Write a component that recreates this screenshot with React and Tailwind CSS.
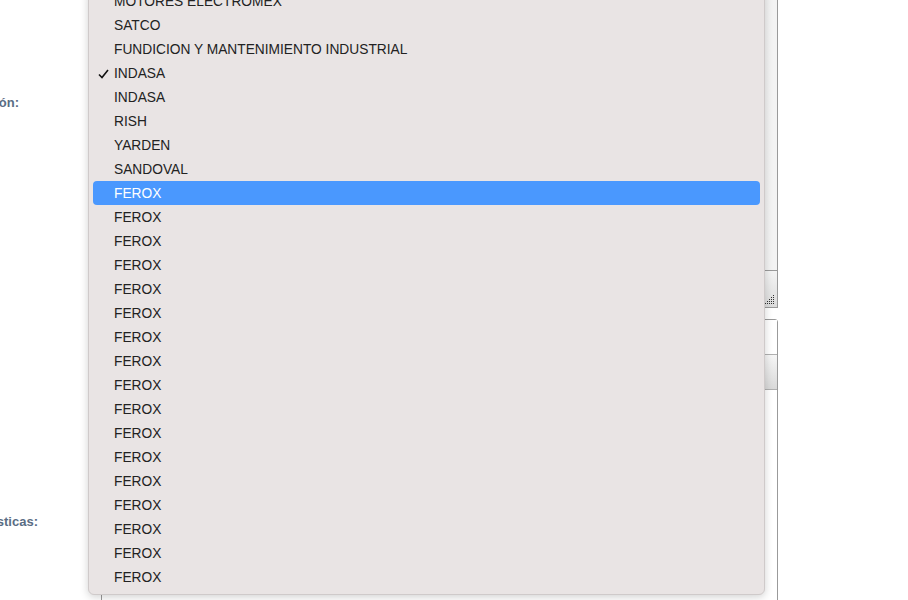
import React from 'react';

const items = [
    'MOTORES ELECTROMEX',
    'SATCO',
    'FUNDICION Y MANTENIMIENTO INDUSTRIAL',
    'INDASA',
    'INDASA',
    'RISH',
    'YARDEN',
    'SANDOVAL',
    ...Array(17).fill('FEROX'),
];

const App = () => {
    return (
        <div className="relative w-[908px] h-[600px] overflow-hidden bg-white font-['Liberation_Sans',Arial,sans-serif]">
            {/* Form behind the menu */}
            <div className="flex">
                <div className="w-[101px] shrink-0 relative">
                    <div className="absolute right-[82px] top-[93px] text-[13px] font-bold text-[#5a6d84] whitespace-nowrap">ón:</div>
                    <div className="absolute right-[63px] top-[512px] text-[13px] font-bold text-[#5a6d84] whitespace-nowrap">sticas:</div>
                </div>
                <div className="w-[677px] flex flex-col">
                    <div className="h-[308px] border-x border-b border-[#9a9a9a] flex flex-col">
                        <div className="flex-1 bg-gradient-to-r from-white to-[#f3f3f3]"></div>
                        <div className="h-[37px] border-t border-[#9a9a9a] bg-gradient-to-b from-[#f4f4f4] to-[#dcdcdc] flex items-end justify-end p-[2px]">
                            <svg width="10" height="10" viewBox="0 0 10 10">
                                {[[8, 0], [6, 2], [8, 2], [4, 4], [6, 4], [8, 4], [2, 6], [4, 6], [6, 6], [8, 6], [0, 8], [2, 8], [4, 8], [6, 8], [8, 8]].map(([x, y], i) => (
                                    <rect key={i} x={x} y={y} width="1" height="1" fill="#333" />
                                ))}
                            </svg>
                        </div>
                    </div>
                    <div className="mt-[11px] h-[300px] border border-[#9a9a9a] rounded-tr-[3px] flex flex-col">
                        <div className="h-[34px] bg-white"></div>
                        <div className="h-[36px] border-y border-[#b0b0b0] bg-gradient-to-b from-[#f6f6f6] to-[#d9d9d9]"></div>
                        <div className="flex-1 bg-white"></div>
                    </div>
                </div>
            </div>

            {/* Open select menu */}
            <div className="absolute left-[88px] top-[-12px] w-[677px] rounded-[6px] border border-[#cfcaca] bg-[#e9e4e4] pb-[5px] px-[4px] shadow-[0_2px_8px_rgba(0,0,0,0.18)]">
                {items.map((label, i) => {
                    const active = i === 8;
                    return (
                        <div
                            key={i}
                            className={`h-[24px] flex items-center pl-[21px] pt-[2px] rounded-[4px] text-[13.75px] leading-none relative ${active ? 'bg-[#4a98fe] text-white' : 'text-[#222]'}`}
                        >
                            {i === 3 && (
                                <svg className="absolute left-[5px] top-[8px]" width="11" height="10" viewBox="0 0 11 10">
                                    <path d="M1 5.5 L4 8.5 L10 1" fill="none" stroke="#111" strokeWidth="1.6" />
                                </svg>
                            )}
                            {label}
                        </div>
                    );
                })}
            </div>
        </div>
    );
};

export default App;
